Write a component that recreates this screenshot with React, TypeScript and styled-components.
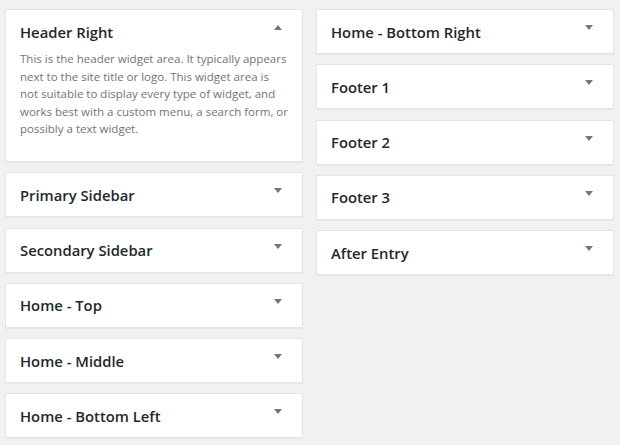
import React from "react";
import styled, { createGlobalStyle } from "styled-components";

const GlobalStyle = createGlobalStyle`
  html, body {
    margin: 0;
    padding: 0;
    background: #f1f1f1;
  }
  body {
    font-family: "Open Sans", Lato, sans-serif;
    color: #23282d;
  }
`;

const Page = styled.div`
  display: grid;
  grid-template-columns: 298px 298px;
  column-gap: 13px;
  align-items: start;
  padding: 9px 0 0 5px;
  width: 620px;
  height: 445px;
  box-sizing: border-box;
  overflow: hidden;
`;

const Column = styled.div`
  display: flex;
  flex-direction: column;
  gap: 10.25px;
`;

const Card = styled.div<{ $open?: boolean }>`
  background: #fff;
  border: 1px solid #e5e5e5;
  box-shadow: 0 1px 1px rgba(0, 0, 0, 0.04);
  padding-bottom: ${(p) => (p.$open ? "23.5px" : "0")};
`;

const Header = styled.div`
  display: flex;
  align-items: center;
  justify-content: space-between;
  height: 43px;
  padding: 0 20px 0 14px;
`;

const Title = styled.h2`
  margin: 0;
  font-size: 14.8px;
  font-weight: 600;
  color: #23282d;
`;

const Toggle = styled.span<{ $open?: boolean }>`
  width: 0;
  height: 0;
  border-left: 4px solid transparent;
  border-right: 4px solid transparent;
  margin-top: -8px;
  ${(p) =>
    p.$open
      ? "border-bottom: 5px solid #72777c;"
      : "border-top: 5px solid #72777c;"}
`;

const Description = styled.p`
  margin: -3px 0 0;
  padding: 0 6px 0 14px;
  font-size: 11.5px;
  line-height: 17.5px;
  color: #6f747a;
  white-space: nowrap;
`;

type Area = { name: string; description?: string[] };

const left: Area[] = [
  {
    name: "Header Right",
    description: [
      "This is the header widget area. It typically appears",
      "next to the site title or logo. This widget area is",
      "not suitable to display every type of widget, and",
      "works best with a custom menu, a search form, or",
      "possibly a text widget.",
    ],
  },
  { name: "Primary Sidebar" },
  { name: "Secondary Sidebar" },
  { name: "Home - Top" },
  { name: "Home - Middle" },
  { name: "Home - Bottom Left" },
];

const right: Area[] = [
  { name: "Home - Bottom Right" },
  { name: "Footer 1" },
  { name: "Footer 2" },
  { name: "Footer 3" },
  { name: "After Entry" },
];

const WidgetArea = ({ area }: { area: Area }) => {
  const open = !!area.description;
  return (
    <Card $open={open}>
      <Header>
        <Title>{area.name}</Title>
        <Toggle $open={open} />
      </Header>
      {area.description && (
        <Description>
          {area.description.map((line, i) => (
            <React.Fragment key={i}>
              {i > 0 && <br />}
              {line}
            </React.Fragment>
          ))}
        </Description>
      )}
    </Card>
  );
};

export default function App() {
  return (
    <>
      <GlobalStyle />
      <Page>
        <Column>
          {left.map((a) => (
            <WidgetArea key={a.name} area={a} />
          ))}
        </Column>
        <Column>
          {right.map((a) => (
            <WidgetArea key={a.name} area={a} />
          ))}
        </Column>
      </Page>
    </>
  );
}
